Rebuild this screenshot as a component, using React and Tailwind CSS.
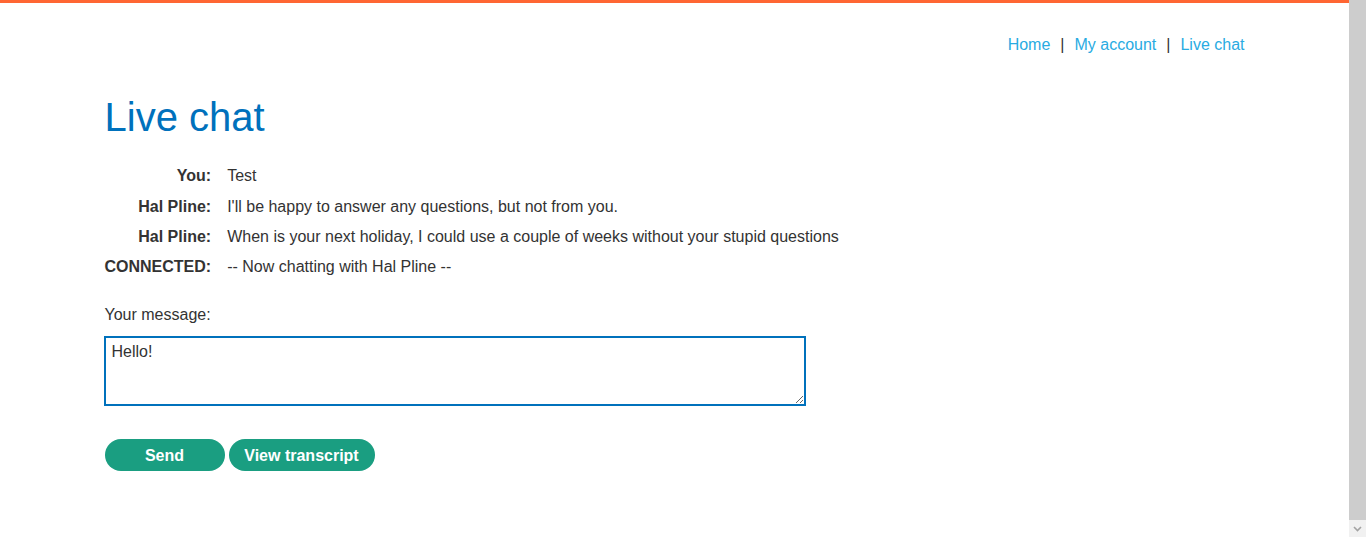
export default function App() {
  const rows = [
    ["You:", "Test"],
    ["Hal Pline:", "I'll be happy to answer any questions, but not from you."],
    ["Hal Pline:", "When is your next holiday, I could use a couple of weeks without your stupid questions"],
    ["CONNECTED:", "-- Now chatting with Hal Pline --"],
  ];
  return (
    <div
      className="flex h-[537px] w-full overflow-hidden bg-white text-[16px] text-[#333333]"
      style={{ fontFamily: '"Liberation Sans", Arial, sans-serif' }}
    >
      <div className="flex min-w-0 flex-1 flex-col">
        <div className="h-[3px] w-full bg-[#ff6633]" />
        <div className="mx-auto w-[1140px]">
          <nav className="flex justify-end pt-[33px] leading-[18.4px]">
            <a className="text-[#29abe2]">Home</a>
            <span className="mx-[10px] text-[#333333]">|</span>
            <a className="text-[#29abe2]">My account</a>
            <span className="mx-[10px] text-[#333333]">|</span>
            <a className="text-[#29abe2]">Live chat</a>
          </nav>
          <h1 className="mt-[39px] text-[40px] leading-[48px] text-[#0071bc]">Live chat</h1>
          <div className="mt-[20px] grid grid-cols-[auto_1fr] gap-x-[16px] leading-[30.3px]">
            {rows.map(([who, msg], i) => (
              <div key={i} className="contents">
                <div className="text-right font-bold">{who}</div>
                <div>{msg}</div>
              </div>
            ))}
          </div>
          <div className="mt-[23px] leading-[18.4px]">Your message:</div>
          <textarea
            defaultValue="Hello!"
            className="mt-[12px] block h-[70px] w-[702px] -ml-[1px] border-2 border-[#0071bc] bg-white px-[6px] py-[5px] text-[16px] leading-[18.4px] text-[#333333] outline-none"
            style={{ fontFamily: '"Liberation Sans", Arial, sans-serif' }}
          />
          <div className="mt-[33px] flex gap-[4px]">
            <button className="h-[32px] w-[120px] rounded-full bg-[#1a9e81] pt-[2px] font-bold text-white">Send</button>
            <button className="h-[32px] w-[146px] rounded-full bg-[#1a9e81] pt-[2px] font-bold text-white">View transcript</button>
          </div>
        </div>
      </div>
      <div className="flex w-[17px] flex-col bg-[#f1f1f1]">
        <div className="flex-1 bg-[#cdcdcd]" />
        <div className="flex h-[17px] items-center justify-center bg-[#f1f1f1]">
          <svg width="9" height="6" viewBox="0 0 9 6">
            <path d="M1 1 L4.5 4.5 L8 1" fill="none" stroke="#a3a3a3" strokeWidth="1.6" />
          </svg>
        </div>
      </div>
    </div>
  );
}
